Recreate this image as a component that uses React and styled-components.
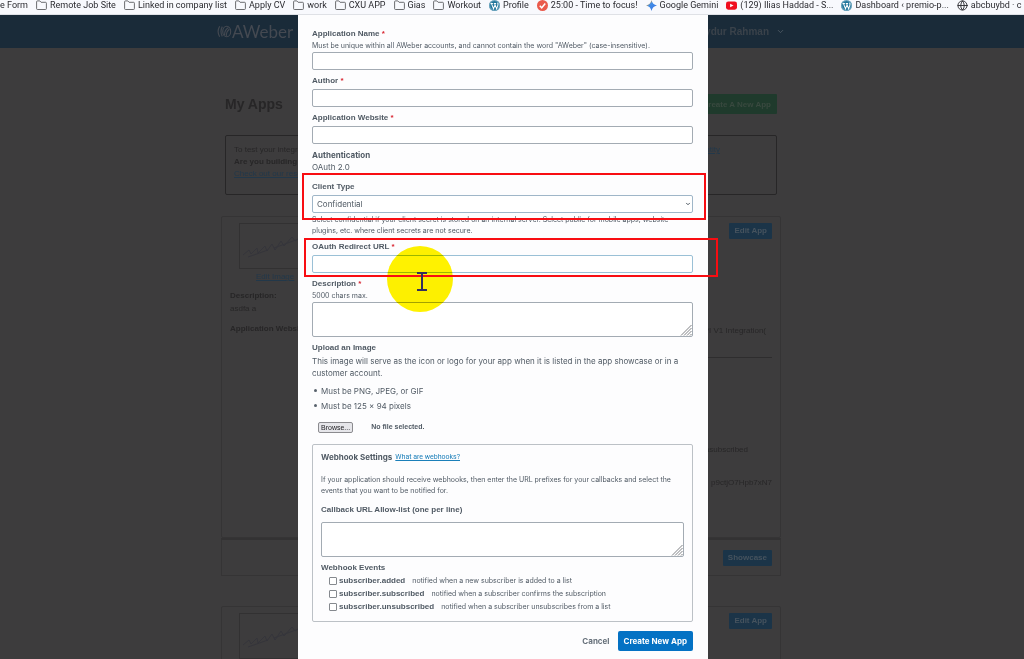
import { useRef } from "react";
import styled, { createGlobalStyle } from "styled-components";
import { ChevronDown, Globe } from "lucide-react";

const GlobalStyle = createGlobalStyle`
  * {
    box-sizing: border-box;
  }
  html, body, #root {
    height: 100%;
  }
  body {
    margin: 0;
    overflow: hidden;
    font-family: "Liberation Sans", Arial, sans-serif;
    font-size: 8px;
    color: #505a64;
  }
  h1, h2, p, ul {
    margin: 0;
    padding: 0;
    font-size: inherit;
  }
  button, input, select, textarea {
    font: inherit;
    color: inherit;
    margin: 0;
  }
`;

const Window = styled.div`
  display: flex;
  flex-direction: column;
  height: 100vh;
  overflow: hidden;
  background: #3d3c3d;
`;

/* ---------- bookmarks bar ---------- */

const Bookmarks = styled.nav`
  display: flex;
  flex: none;
  align-items: center;
  gap: 8px;
  height: 15px;
  padding-bottom: 4px;
  overflow: hidden;
  background: #f8f9fd;
  border-bottom: 1px solid #dfe1e6;
  font-family: Roboto, "Noto Sans", sans-serif;
  font-size: 9px;
  line-height: 10px;
`;

const Bookmark = styled.a`
  display: flex;
  flex: none;
  align-items: center;
  gap: 3px;
  color: #2b2b30;
  white-space: nowrap;
  text-decoration: none;
  svg {
    flex: none;
    width: 11px;
    height: 11px;
  }
`;

const FolderIcon = () => (
  <svg viewBox="0 0 11 11" fill="none" stroke="#5b5c60" strokeWidth="0.9">
    <path d="M0.6 8.6V1.8q0-.9.9-.9h2.3l1.3 1.4h4.4q.9 0 .9.9v5.4q0 .9-.9.9h-8q-.9 0-.9-.9z" />
  </svg>
);

const WordpressIcon = () => (
  <svg viewBox="0 0 24 24">
    <circle cx="12" cy="12" r="12" fill="#21759b" />
    <circle cx="12" cy="12" r="10.6" fill="none" stroke="#dfeef5" strokeWidth="1" />
    <path
      d="M3.5 7.5h5M10.5 7.5h5M5.5 7.8l4.3 11.5L12.4 12M12.3 7.8l4.3 11.5L19.4 11q.8-3-.9-4.600"
      fill="none"
      stroke="#fff"
      strokeWidth="2.2"
    />
  </svg>
);

const CheckIcon = () => (
  <svg viewBox="0 0 24 24">
    <circle cx="12" cy="12" r="12" fill="#ea5a4c" />
    <path d="M6 12.500l4.300 4.500L18 7.500" fill="none" stroke="#fff" strokeWidth="3.200" />
  </svg>
);

const GeminiIcon = () => (
  <svg viewBox="0 0 24 24">
    <defs>
      <linearGradient id="gem" x1="0" y1="0" x2="1" y2="1">
        <stop offset="0.2" stopColor="#f0a12e" />
        <stop offset="0.4" stopColor="#3f8de8" />
        <stop offset="1" stopColor="#3b6fe0" />
      </linearGradient>
    </defs>
    <path d="M12 0q2 10 12 12-10 2-12 12-2-10-12-12 10-2 12-12z" fill="url(#gem)" />
  </svg>
);

const YoutubeIcon = () => (
  <svg viewBox="0 0 24 24">
    <rect x="0" y="3" width="24" height="18" rx="5" fill="#f00e1f" />
    <path d="M9 8l7.500 4L9 16z" fill="#fff" />
  </svg>
);

const bookmarks = [
  { label: "e Form" },
  { label: "Remote Job Site", Icon: FolderIcon },
  { label: "Linked in company list", Icon: FolderIcon },
  { label: "Apply CV", Icon: FolderIcon },
  { label: "work", Icon: FolderIcon },
  { label: "CXU APP", Icon: FolderIcon },
  { label: "Gias", Icon: FolderIcon },
  { label: "Workout", Icon: FolderIcon },
  { label: "Profile", Icon: WordpressIcon },
  { label: "25:00 - Time to focus!", Icon: CheckIcon },
  { label: "Google Gemini", Icon: GeminiIcon },
  { label: "(129) Ilias Haddad - S...", Icon: YoutubeIcon },
  { label: "Dashboard ‹ premio-p...", Icon: WordpressIcon },
  { label: "abcbuybd · c", Icon: Globe },
];

/* ---------- dimmed page behind the dialog ---------- */

const Viewport = styled.div`
  position: relative;
  flex: 1;
  min-height: 0;
`;

const Backdrop = styled.div`
  height: 100%;
  overflow: hidden;
  color: #272627;
`;

const Container = styled.div`
  max-width: 560px;
  margin: 0 auto;
`;

const TopBar = styled.header`
  height: 33px;
  padding-right: 22px;
  background: #1a2b39;
`;

const TopBarInner = styled(Container)`
  display: flex;
  align-items: center;
  justify-content: space-between;
  height: 100%;
`;

const Brand = styled.div`
  display: flex;
  align-items: center;
  margin-left: -4px;
  font: 17px/20px Lato, sans-serif;
  color: #444951;
`;

const UserMenu = styled.button`
  display: flex;
  align-items: center;
  gap: 7px;
  margin-right: -4px;
  padding: 0;
  border: 0;
  background: none;
  color: #3a424a;
  font-size: 10px;
  font-weight: bold;
`;

const Main = styled.main`
  padding: 46px 22px 0 0;
`;

const TitleRow = styled.div`
  display: flex;
  align-items: center;
  justify-content: space-between;
  height: 20px;
  padding: 0 4px;
  h1 {
    font-size: 14px;
    line-height: 16px;
  }
`;

const DimButton = styled.button`
  flex: none;
  height: ${({ $large }) => ($large ? 20 : 16)}px;
  padding: 0 ${({ $large }) => ($large ? 6 : 5)}px;
  border: 0;
  border-radius: 1px;
  background: ${({ $green }) => ($green ? "#1f3a2c" : "#1b3448")};
  color: ${({ $green }) => ($green ? "#39493f" : "#46535e")};
  font-weight: bold;
`;

const Notice = styled.section`
  height: 60px;
  margin: 21px 4px;
  padding: 8px;
  border: 1px solid #272627;
  border-radius: 2px;
  line-height: 12px;
`;

const NoticeLine = styled.div`
  display: flex;
  justify-content: space-between;
  padding-right: 48px;
`;

const DimLink = styled.a`
  color: #22384a;
`;

const Card = styled.section`
  display: flex;
  justify-content: space-between;
  height: ${({ $short }) => ($short ? 60 : 322)}px;
  padding: 6px 8px;
  border: 1px solid #353435;
  border-radius: 2px;
`;

const CardSide = styled.div`
  display: flex;
  flex-direction: column;
  gap: 3px;
  width: 90px;
  line-height: 10px;
  ${DimLink} {
    padding-left: 26px;
  }
`;

const Thumb = styled.div`
  height: 46px;
  margin-left: 9px;
  border: 1px solid #323132;
  overflow: hidden;
`;

const CardMain = styled.div`
  display: flex;
  flex-direction: column;
  align-items: flex-end;
  width: 160px;
  line-height: 12px;
`;

const CardValue = styled.p`
  margin-top: ${({ $gap }) => $gap}px;
  padding-right: ${({ $inset }) => $inset || 0}px;
`;

const Rule = styled.hr`
  width: 100%;
  margin: 20px 0 0;
  border: 0;
  border-top: 1px solid #2e2d2e;
`;

const ShowcaseRow = styled.div`
  display: flex;
  align-items: center;
  justify-content: flex-end;
  height: 38px;
  margin-bottom: 30px;
  padding: 0 8px;
  border: 1px solid #353435;
  border-top: 2px solid #333233;
`;

const Signature = () => (
  <svg width="80" height="44" viewBox="0 0 80 44" fill="none" stroke="#35353b">
    <path d="M3 31l6-5 2 4 6-6 1 5 7-7 2 5 5-7 3 6 6-9 3 5 8-9 3 4 12-8M8 33l20-7M34 24l30-11" />
  </svg>
);

/* ---------- dialog ---------- */

const Overlay = styled.div`
  position: absolute;
  inset: 0;
  display: flex;
  justify-content: center;
  padding-right: 18px;
`;

const Dialog = styled.form`
  display: flex;
  flex-direction: column;
  gap: 5px;
  width: 410px;
  max-width: 100%;
  height: 100%;
  padding: 13px 15px 0 14px;
  background: #fdfdfe;
  line-height: 12px;
`;

const Field = styled.div`
  position: relative;
  display: flex;
  flex-direction: column;
`;

const Label = styled.label`
  margin-bottom: ${({ $gap = 2 }) => $gap}px;
  font-weight: bold;
`;

const Required = styled.span`
  color: #d8232f;
`;

const Hint = styled.p`
  font-family: Inter, sans-serif;
  font-size: 7px;
  line-height: ${({ $multi }) => ($multi ? 11 : 12)}px;
  margin-top: ${({ $multi }) => ($multi ? 1 : 0)}px;
`;

const BodyText = styled.p`
  margin-top: 1px;
  font-family: Inter, sans-serif;
`;

const AuthBlock = styled.div`
  padding-bottom: 3px;
  font-family: Inter, sans-serif;
`;

const TextInput = styled.input`
  width: 100%;
  height: 18px;
  padding: 0 4px;
  border: 1px solid ${({ $active }) => ($active ? "#9ac0d6" : "#a3abb3")};
  border-radius: 2px;
  background: #fff;
  outline: none;
`;

const SelectWrap = styled.div`
  position: relative;
  svg {
    position: absolute;
    right: 2px;
    top: 6px;
  }
`;

const Select = styled.select`
  display: block;
  width: 100%;
  height: 18px;
  padding: 0 4px;
  appearance: none;
  border: 1px solid #9fb6c8;
  border-radius: 2px;
  background: #fff;
  font-family: Inter, sans-serif;
`;

const AreaWrap = styled.div`
  position: relative;
  svg {
    position: absolute;
    right: 1px;
    bottom: 1px;
    pointer-events: none;
  }
`;

const Area = styled.textarea`
  display: block;
  width: 100%;
  height: 35px;
  padding: 4px;
  resize: none;
  border: 1px solid #a3abb3;
  border-radius: 2px;
  background: #fff;
  outline: none;
`;

const Requirements = styled.ul`
  padding-left: 9px;
  font-family: Inter, sans-serif;
  line-height: 15px;
  li {
    list-style: none;
  }
  li::before {
    content: "";
    display: inline-block;
    width: 3px;
    height: 3px;
    margin: 0 4px 2px -7px;
    border-radius: 50%;
    background: #58626c;
  }
`;

const FileRow = styled.div`
  display: flex;
  align-items: center;
  gap: 18px;
  margin: 2px 0 6px 6px;
  font-size: 7px;
  font-weight: bold;
`;

const BrowseButton = styled.button`
  height: 11px;
  padding: 0 2px;
  border: 1px solid #8b8b8f;
  border-radius: 2px;
  background: #e6e6ea;
  color: #1c1c20;
  font-weight: normal;
  line-height: 9px;
`;

const Webhooks = styled.section`
  display: flex;
  flex-direction: column;
  padding: 6px 8px 8px;
  border: 1px solid #bcc1c6;
  border-radius: 2px;
`;

const WebhookHead = styled.div`
  display: flex;
  align-items: center;
  gap: 3px;
  margin-bottom: 10px;
  font-family: Inter, sans-serif;
  a {
    font-family: Roboto, sans-serif;
    font-size: 7px;
    color: #1b7fb9;
  }
`;

const CallbackField = styled(Field)`
  margin-top: 8px;
`;

const Events = styled.div`
  display: flex;
  flex-direction: column;
  margin-top: 5px;
`;

const EventRow = styled.label`
  display: flex;
  align-items: center;
  height: 13px;
  padding-left: 8px;
  input {
    width: 8px;
    height: 8px;
    margin-right: 2px;
    appearance: none;
    border: 1px solid #85898e;
    border-radius: 1px;
    background: #fff;
  }
  span {
    margin-left: 7px;
    font-family: Inter, sans-serif;
    font-size: 7px;
  }
`;

const Footer = styled.div`
  display: flex;
  justify-content: flex-end;
  gap: 8px;
  margin-top: 4px;
`;

const ActionButton = styled.button`
  height: 20px;
  padding: 0 ${({ $primary }) => ($primary ? 6 : 0)}px;
  border: 0;
  border-radius: 2px;
  background: ${({ $primary }) => ($primary ? "#0472c4" : "none")};
  color: ${({ $primary }) => ($primary ? "#fff" : "#66707a")};
  font-family: Inter, sans-serif;
  font-weight: bold;
`;

/* ---------- marks drawn over the form ---------- */

const Highlight = styled.div`
  position: absolute;
  inset: ${({ $inset }) => $inset};
  z-index: 2;
  border: 2px solid #f80d12;
  pointer-events: none;
`;

const Spotlight = styled.div`
  position: absolute;
  top: 5px;
  left: 75px;
  z-index: 1;
  width: 66px;
  height: 66px;
  border-radius: 50%;
  background: #fff200;
  mix-blend-mode: multiply;
  pointer-events: none;
`;

const Caret = styled.svg`
  position: absolute;
  top: 31px;
  left: 104px;
  z-index: 3;
  pointer-events: none;
`;

const ResizeGrip = () => (
  <svg width="12" height="12" viewBox="0 0 12 12" stroke="#6f7377" strokeWidth="0.9">
    <path d="M1 11.500L11.500 1M4 11.500l7.500-7.500M7 11.500l4.500-4.500M10 11.500l1.500-1.500" />
  </svg>
);

const events = [
  { name: "subscriber.added", text: "notified when a new subscriber is added to a list" },
  { name: "subscriber.subscribed", text: "notified when a subscriber confirms the subscription" },
  { name: "subscriber.unsubscribed", text: "notified when a subscriber unsubscribes from a list" },
];

const BackgroundPage = () => (
  <Backdrop>
    <TopBar>
      <TopBarInner>
        <Brand>
          <svg width="15" height="15" viewBox="0 0 17 16" fill="none" stroke="#444951" strokeWidth="1.300">
            <path d="M3 2q-3.500 6 0 12M6 2.500q-3 5.500 0 11" />
            <ellipse cx="11" cy="8" rx="4.500" ry="6" />
            <path d="M8.500 12q0-6 4.500-8.500M10.500 13q0-5 3.500-7.500" />
          </svg>
          AWeber
        </Brand>
        <UserMenu>
          Saydur Rahman <ChevronDown size={9} color="#55606a" />
        </UserMenu>
      </TopBarInner>
    </TopBar>
    <Main>
      <Container>
        <TitleRow>
          <h1>My Apps</h1>
          <DimButton $green $large>Create A New App</DimButton>
        </TitleRow>
        <Notice>
          <NoticeLine>
            <span>To test your integration</span>
            <DimLink href="#">entity</DimLink>
          </NoticeLine>
          <p>
            <b>Are you building</b>
          </p>
          <DimLink href="#">Check out our resources</DimLink>
        </Notice>
        <Card>
          <CardSide>
            <Thumb>
              <Signature />
            </Thumb>
            <DimLink href="#">Edit Image</DimLink>
            <CardValue $gap={6}>
              <b>Description:</b>
            </CardValue>
            <p>asdfa a</p>
            <CardValue $gap={7}>
              <b>Application Website</b>
            </CardValue>
          </CardSide>
          <CardMain>
            <DimButton>Edit App</DimButton>
            <CardValue $gap={86} $inset={6}>API V1 Integration(</CardValue>
            <Rule />
            <CardValue $gap={86} $inset={24}>unsubscribed</CardValue>
            <CardValue $gap={21}>p9ctjO7Hpb7xN7</CardValue>
          </CardMain>
        </Card>
        <ShowcaseRow>
          <DimButton>Showcase</DimButton>
        </ShowcaseRow>
        <Card $short>
          <CardSide>
            <Thumb>
              <Signature />
            </Thumb>
          </CardSide>
          <CardMain>
            <DimButton>Edit App</DimButton>
          </CardMain>
        </Card>
      </Container>
    </Main>
  </Backdrop>
);

const App = () => {
  const fileRef = useRef(null);

  return (
    <Window>
      <GlobalStyle />
      <Bookmarks>
        {bookmarks.map(({ label, Icon }) => (
          <Bookmark href="#" key={label}>
            {Icon && <Icon />}
            {label}
          </Bookmark>
        ))}
      </Bookmarks>
      <Viewport>
        <BackgroundPage />
        <Overlay>
          <Dialog onSubmit={(e) => e.preventDefault()}>
            <Field>
              <Label htmlFor="name" $gap={0}>
                Application Name <Required>*</Required>
              </Label>
              <Hint>
                Must be unique within all AWeber accounts, and cannot contain the word "AWeber"
                (case-insensitive).
              </Hint>
              <TextInput id="name" />
            </Field>
            <Field>
              <Label htmlFor="author">
                Author <Required>*</Required>
              </Label>
              <TextInput id="author" />
            </Field>
            <Field>
              <Label htmlFor="website">
                Application Website <Required>*</Required>
              </Label>
              <TextInput id="website" />
            </Field>
            <AuthBlock>
              <h2>Authentication</h2>
              <p>OAuth 2.0</p>
            </AuthBlock>
            <Field>
              <Label htmlFor="client">Client Type</Label>
              <SelectWrap>
                <Select id="client" defaultValue="confidential">
                  <option value="confidential">Confidential</option>
                  <option value="public">Public</option>
                </Select>
                <ChevronDown size={6} strokeWidth={4} />
              </SelectWrap>
              <Hint $multi>
                Select confidential if your client secret is stored on an internal server. Select
                public for mobile apps, website plugins, etc. where client secrets are not secure.
              </Hint>
              <Highlight $inset="-8px -13px 16px -10px" />
            </Field>
            <Field>
              <Label htmlFor="redirect">
                OAuth Redirect URL <Required>*</Required>
              </Label>
              <TextInput id="redirect" $active />
              <Spotlight />
              <Highlight $inset="-3px -25px -4px -8px" />
              <Caret width="12" height="19" viewBox="0 0 12 19" fill="none" stroke="#34305e" strokeWidth="2">
                <path d="M1 1h10M1 18h10M6 1v17" />
              </Caret>
            </Field>
            <Field>
              <Label htmlFor="description" $gap={0}>
                Description <Required>*</Required>
              </Label>
              <Hint>5000 chars max.</Hint>
              <AreaWrap>
                <Area id="description" />
                <ResizeGrip />
              </AreaWrap>
            </Field>
            <Field>
              <Label htmlFor="image" $gap={0}>
                Upload an Image
              </Label>
              <BodyText>
                This image will serve as the icon or logo for your app when it is listed in the app
                showcase or in a customer account.
              </BodyText>
            </Field>
            <Requirements>
              <li>Must be PNG, JPEG, or GIF</li>
              <li>Must be 125 x 94 pixels</li>
            </Requirements>
            <FileRow>
              <input id="image" type="file" accept="image/*" ref={fileRef} hidden />
              <BrowseButton type="button" onClick={() => fileRef.current.click()}>
                Browse...
              </BrowseButton>
              No file selected.
            </FileRow>
            <Webhooks>
              <WebhookHead>
                <h2>Webhook Settings</h2>
                <a href="#">What are webhooks?</a>
              </WebhookHead>
              <Hint $multi>
                If your application should receive webhooks, then enter the URL prefixes for your
                callbacks and select the events that you want to be notified for.
              </Hint>
              <CallbackField>
                <Label htmlFor="callback" $gap={6}>
                  Callback URL Allow-list (one per line)
                </Label>
                <AreaWrap>
                  <Area id="callback" />
                  <ResizeGrip />
                </AreaWrap>
              </CallbackField>
              <Events>
                <b>Webhook Events</b>
                {events.map(({ name, text }) => (
                  <EventRow key={name}>
                    <input type="checkbox" name={name} />
                    <b>{name}</b>
                    <span>{text}</span>
                  </EventRow>
                ))}
              </Events>
            </Webhooks>
            <Footer>
              <ActionButton type="button">Cancel</ActionButton>
              <ActionButton type="submit" $primary>
                Create New App
              </ActionButton>
            </Footer>
          </Dialog>
        </Overlay>
      </Viewport>
    </Window>
  );
};

export default App;
